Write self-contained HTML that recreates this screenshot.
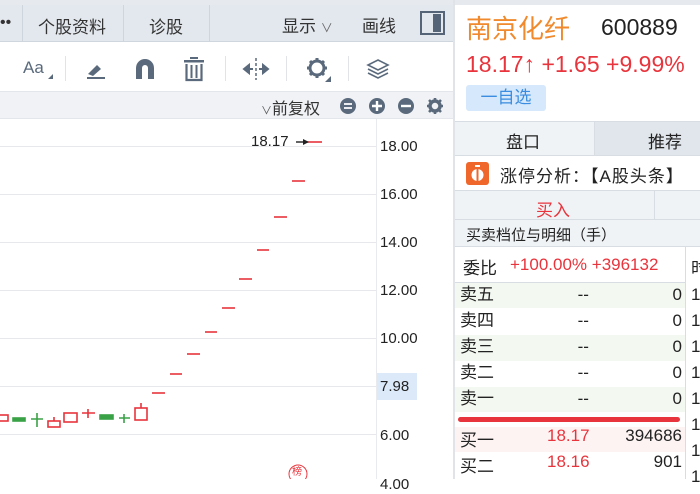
<!DOCTYPE html><html><head><meta charset="utf-8"><style>
*{margin:0;padding:0;box-sizing:border-box}
body{width:700px;height:479px;overflow:hidden;position:relative;background:#fff;font-family:"Liberation Sans","Noto Sans CJK SC",sans-serif;color:#222}
.a{position:absolute}
.t{white-space:nowrap}
</style></head><body>
<div class="a" style="left:0;top:0;width:700px;height:5px;background:#e6eaef"></div>
<div class="a" style="left:0;top:5px;width:453px;height:37px;background:#e3e8ee;border-bottom:1px solid #d0d6de"></div>
<div class="a t" style="left:0;top:14px;font-size:16px;color:#333">••</div>
<div class="a" style="left:22px;top:5px;width:1px;height:37px;background:#cfd5dd"></div>
<div class="a t" style="left:38px;top:13px;font-size:17px;color:#333">个股资料</div>
<div class="a" style="left:123px;top:5px;width:1px;height:37px;background:#cfd5dd"></div>
<div class="a t" style="left:149px;top:13px;font-size:17px;color:#333">诊股</div>
<div class="a" style="left:209px;top:5px;width:1px;height:37px;background:#cfd5dd"></div>
<div class="a t" style="left:282px;top:12px;font-size:17px;color:#333">显示 <span style="font-size:12px;color:#666">∨</span></div>
<div class="a t" style="left:362px;top:12px;font-size:17px;color:#333">画线</div>
<div class="a" style="left:420px;top:11px;width:25px;height:24px;border:2px solid #556577"></div>
<div class="a" style="left:433px;top:14px;width:8px;height:18px;background:#556577"></div>
<div class="a" style="left:0;top:42px;width:453px;height:50px;background:#fff;border-bottom:1px solid #e3e6ea"></div>
<div class="a t" style="left:23px;top:58px;font-size:17px;color:#5a6a7c">Aa</div>
<div class="a" style="left:48px;top:74px;width:0;height:0;border-left:5px solid transparent;border-bottom:5px solid #5a6a7c"></div>
<div class="a" style="left:65px;top:56px;width:1px;height:25px;background:#e0e3e7"></div>
<svg class="a" style="left:84px;top:57px" width="24" height="24" viewBox="0 0 24 24"><path d="M4 17 L13 8 L17 12 L9 19 Z" fill="#5a6a7c"/><rect x="3" y="20" width="18" height="2" fill="#5a6a7c"/></svg>
<svg class="a" style="left:134px;top:57px" width="22" height="24" viewBox="0 0 22 24"><path d="M2 22 V11 A9 9 0 0 1 20 11 V22 H14 V11 A3 3 0 0 0 8 11 V22 Z" fill="#5a6a7c"/></svg>
<svg class="a" style="left:182px;top:56px" width="24" height="26" viewBox="0 0 24 26"><rect x="2" y="4" width="20" height="2.5" fill="#5a6a7c"/><rect x="8" y="1" width="8" height="2" fill="#5a6a7c"/><path d="M4.5 8 V24 H19.5 V8" fill="none" stroke="#5a6a7c" stroke-width="2.2"/><path d="M9.5 9 V22 M14.5 9 V22" stroke="#5a6a7c" stroke-width="2"/></svg>
<div class="a" style="left:225px;top:56px;width:1px;height:25px;background:#e0e3e7"></div>
<svg class="a" style="left:242px;top:58px" width="28" height="22" viewBox="0 0 28 22"><path d="M14 0 V22" stroke="#5a6a7c" stroke-width="1.5" stroke-dasharray="3 2"/><path d="M2 11 L7 7 V15 Z M26 11 L21 7 V15 Z M7 11 H11 M17 11 H21" stroke="#5a6a7c" fill="#5a6a7c" stroke-width="2"/></svg>
<div class="a" style="left:286px;top:56px;width:1px;height:25px;background:#e0e3e7"></div>
<svg class="a" style="left:305px;top:56px" width="26" height="26" viewBox="0 0 26 26"><circle cx="12" cy="12" r="7" fill="none" stroke="#5a6a7c" stroke-width="3"/><path d="M12 2 V5 M12 19 V22 M2 12 H5 M19 12 H22 M5 5 L7 7 M17 17 L19 19 M19 5 L17 7 M5 19 L7 17" stroke="#5a6a7c" stroke-width="3"/><path d="M26 20 L26 26 L20 26 Z" fill="#5a6a7c"/></svg>
<div class="a" style="left:348px;top:56px;width:1px;height:25px;background:#e0e3e7"></div>
<svg class="a" style="left:366px;top:58px" width="24" height="22" viewBox="0 0 24 22"><path d="M12 2 L22 7 L12 12 L2 7 Z M2 11 L12 16 L22 11 M2 15 L12 20 L22 15" fill="none" stroke="#5a6a7c" stroke-width="1.6"/></svg>
<div class="a" style="left:0;top:92px;width:453px;height:27px;background:#f0f2f5;border-bottom:1px solid #e3e6ea"></div>
<div class="a t" style="left:261px;top:95px;font-size:16px;color:#333"><span style="font-size:11px;color:#555">∨</span>前复权</div>
<svg class="a" style="left:339px;top:97px" width="110" height="18" viewBox="0 0 110 18"><circle cx="9" cy="9" r="8" fill="#5a6a7c"/><path d="M5 7H13M5 11H13" stroke="#fff" stroke-width="1.8"/><circle cx="38" cy="9" r="8" fill="#5a6a7c"/><path d="M33 9H43M38 4V14" stroke="#fff" stroke-width="2.4"/><circle cx="67" cy="9" r="8" fill="#5a6a7c"/><path d="M62 9H72" stroke="#fff" stroke-width="2.4"/><circle cx="96" cy="9" r="5" fill="none" stroke="#5a6a7c" stroke-width="3.5"/><path d="M96 1V4M96 14V17M88 9H91M101 9H104M90 3L92 5M100 13L102 15M102 3L100 5M90 15L92 13" stroke="#5a6a7c" stroke-width="2.6"/></svg>
<div class="a" style="left:376px;top:119px;width:1px;height:360px;background:#e8eaed"></div>
<div class="a" style="left:453px;top:0;width:2px;height:479px;background:#e0e4e9"></div>
<svg class="a" style="left:0;top:119px" width="453" height="360">
<g stroke="#e6e8eb" stroke-width="1"><path d="M0 27.5H376M0 75.5H376M0 123.5H376M0 171.5H376M0 219.5H376M0 267.5H376M0 315.5H376"/></g>
</svg>
<svg class="a" style="left:0;top:119px" width="376" height="360">
<g stroke="#e8343c" stroke-width="1.6" fill="#fff">
<path d="M307 23H322"/><path d="M292 62H305"/><path d="M274 98H287"/><path d="M257 131H269"/><path d="M239 160H252"/><path d="M222 189H235"/><path d="M205 213H217"/><path d="M187 235H200"/><path d="M170 255H182"/><path d="M152 274H165"/>
<rect x="135" y="289" width="12" height="12"/><path d="M141 284V289"/>
<rect x="64" y="294" width="13" height="9"/><rect x="48" y="302" width="12" height="6"/><path d="M54 298V302"/>
<path d="M82 294H95M88 290V299"/><rect x="-2" y="296" width="10" height="6"/>
</g>
<g stroke="#3aa246" stroke-width="1.6" fill="#3aa246">
<rect x="13" y="299" width="12" height="3"/><path d="M31 300H43M37 294V308"/><rect x="100" y="296" width="13" height="4"/><path d="M119 299H130M124 295V304"/>
</g>
<path d="M296 23H306" stroke="#222" stroke-width="1.4"/><path d="M309 23L303 20V26Z" fill="#222"/>
<circle cx="298" cy="355" r="9" fill="none" stroke="#e8343c" stroke-width="1"/>
</svg>
<div class="a t" style="left:251px;top:133px;font-size:15px;color:#222">18.17</div>
<div class="a t" style="left:292px;top:463px;font-size:10px;color:#e8343c">榜</div>
<div class="a" style="left:377px;top:373px;width:40px;height:27px;background:#dce9f9"></div>
<div class="a t" style="left:380px;top:138px;font-size:15px;line-height:18px;color:#222">18.00</div>
<div class="a t" style="left:380px;top:186px;font-size:15px;line-height:18px;color:#222">16.00</div>
<div class="a t" style="left:380px;top:234px;font-size:15px;line-height:18px;color:#222">14.00</div>
<div class="a t" style="left:380px;top:282px;font-size:15px;line-height:18px;color:#222">12.00</div>
<div class="a t" style="left:380px;top:330px;font-size:15px;line-height:18px;color:#222">10.00</div>
<div class="a t" style="left:380px;top:378px;font-size:15px;line-height:18px;color:#222">7.98</div>
<div class="a t" style="left:380px;top:427px;font-size:15px;line-height:18px;color:#222">6.00</div>
<div class="a t" style="left:380px;top:476px;font-size:15px;line-height:18px;color:#222">4.00</div>
<div class="a t" style="left:466px;top:9px;font-size:26px;color:#f08a2c">南京化纤</div>
<div class="a t" style="left:601px;top:14px;font-size:23px;color:#222">600889</div>
<div class="a t" style="left:466px;top:51px;font-size:23px;color:#e8343c">18.17↑ +1.65 +9.99%</div>
<div class="a t" style="left:466px;top:85px;width:80px;height:26px;background:#d6e8fb;border-radius:3px;color:#3a8de0;font-size:17px;line-height:26px;text-align:center">一自选</div>
<div class="a" style="left:455px;top:121px;width:245px;height:1px;background:#d8dde3"></div>
<div class="a" style="left:455px;top:122px;width:139px;height:33px;background:#f0f3f6"></div>
<div class="a" style="left:594px;top:122px;width:1px;height:33px;background:#d8dde3"></div>
<div class="a" style="left:595px;top:122px;width:105px;height:33px;background:#e1e6ec"></div>
<div class="a t" style="left:506px;top:128px;font-size:17px">盘口</div>
<div class="a t" style="left:648px;top:128px;font-size:17px">推荐</div>
<div class="a" style="left:455px;top:155px;width:245px;height:1px;background:#d8dde3"></div>
<div class="a" style="left:466px;top:162px;width:23px;height:23px;background:#f0672b;border-radius:3px"></div>
<svg class="a" style="left:466px;top:162px" width="23" height="23"><circle cx="11.5" cy="13" r="6" fill="#fff"/><path d="M11.5 7V19" stroke="#f0672b" stroke-width="2"/><path d="M9 4H14" stroke="#fff" stroke-width="2"/></svg>
<div class="a t" style="left:500px;top:162px;font-size:17px;color:#222;letter-spacing:1px">涨停分析：【A股头条】</div>
<div class="a" style="left:455px;top:190px;width:245px;height:30px;background:#f0f3f6;border-top:1px solid #d8dde3;border-bottom:1px solid #d8dde3"></div>
<div class="a" style="left:654px;top:190px;width:1px;height:30px;background:#d8dde3"></div>
<div class="a t" style="left:536px;top:196px;font-size:17px;color:#e8343c">买入</div>
<div class="a" style="left:455px;top:220px;width:245px;height:27px;background:#f0f3f6;border-bottom:1px solid #d8dde3"></div>
<div class="a t" style="left:466px;top:224px;font-size:15px;color:#222">买卖档位与明细（手）</div>
<div class="a" style="left:685px;top:247px;width:1px;height:232px;background:#d8dde3"></div>
<div class="a t" style="left:463px;top:254px;font-size:17px;color:#222">委比</div>
<div class="a t" style="left:510px;top:255px;font-size:17px;color:#e8343c">+100.00% +396132</div>
<div class="a" style="left:455px;top:282px;width:230px;height:1px;background:#d8dde3"></div>
<div class="a" style="left:455px;top:283px;width:230px;height:25px;background:#f3f8f1"></div>
<div class="a" style="left:455px;top:335px;width:230px;height:26px;background:#f3f8f1"></div>
<div class="a" style="left:455px;top:387px;width:230px;height:25px;background:#f3f8f1"></div>
<div class="a" style="left:458px;top:417px;width:222px;height:5px;background:#e8343c;border-radius:3px"></div>
<div class="a" style="left:455px;top:427px;width:230px;height:25px;background:#fdf3f3"></div>
<div class="a" style="left:460px;top:282px;width:222px;font-size:17px;line-height:26px">
<div style="display:flex;justify-content:space-between"><span>卖五</span><span>--</span><span>0</span></div>
<div style="display:flex;justify-content:space-between"><span>卖四</span><span>--</span><span>0</span></div>
<div style="display:flex;justify-content:space-between"><span>卖三</span><span>--</span><span>0</span></div>
<div style="display:flex;justify-content:space-between"><span>卖二</span><span>--</span><span>0</span></div>
<div style="display:flex;justify-content:space-between"><span>卖一</span><span>--</span><span>0</span></div>
</div>
<div class="a t" style="left:460px;top:426px;font-size:17px">买一</div><div class="a t" style="left:547px;top:426px;font-size:17px;color:#e8343c">18.17</div><div class="a t" style="left:682px;top:426px;font-size:17px;transform:translateX(-100%)">394686</div>
<div class="a t" style="left:460px;top:452px;font-size:17px">买二</div><div class="a t" style="left:547px;top:452px;font-size:17px;color:#e8343c">18.16</div><div class="a t" style="left:682px;top:452px;font-size:17px;transform:translateX(-100%)">901</div>
<div class="a" style="left:691px;top:282px;font-size:17px;line-height:26px;color:#222">1<br>1<br>1<br>1<br>1<br>1<br>1<br>1</div>
<div class="a t" style="left:691px;top:254px;font-size:17px">时</div>
</body></html>
